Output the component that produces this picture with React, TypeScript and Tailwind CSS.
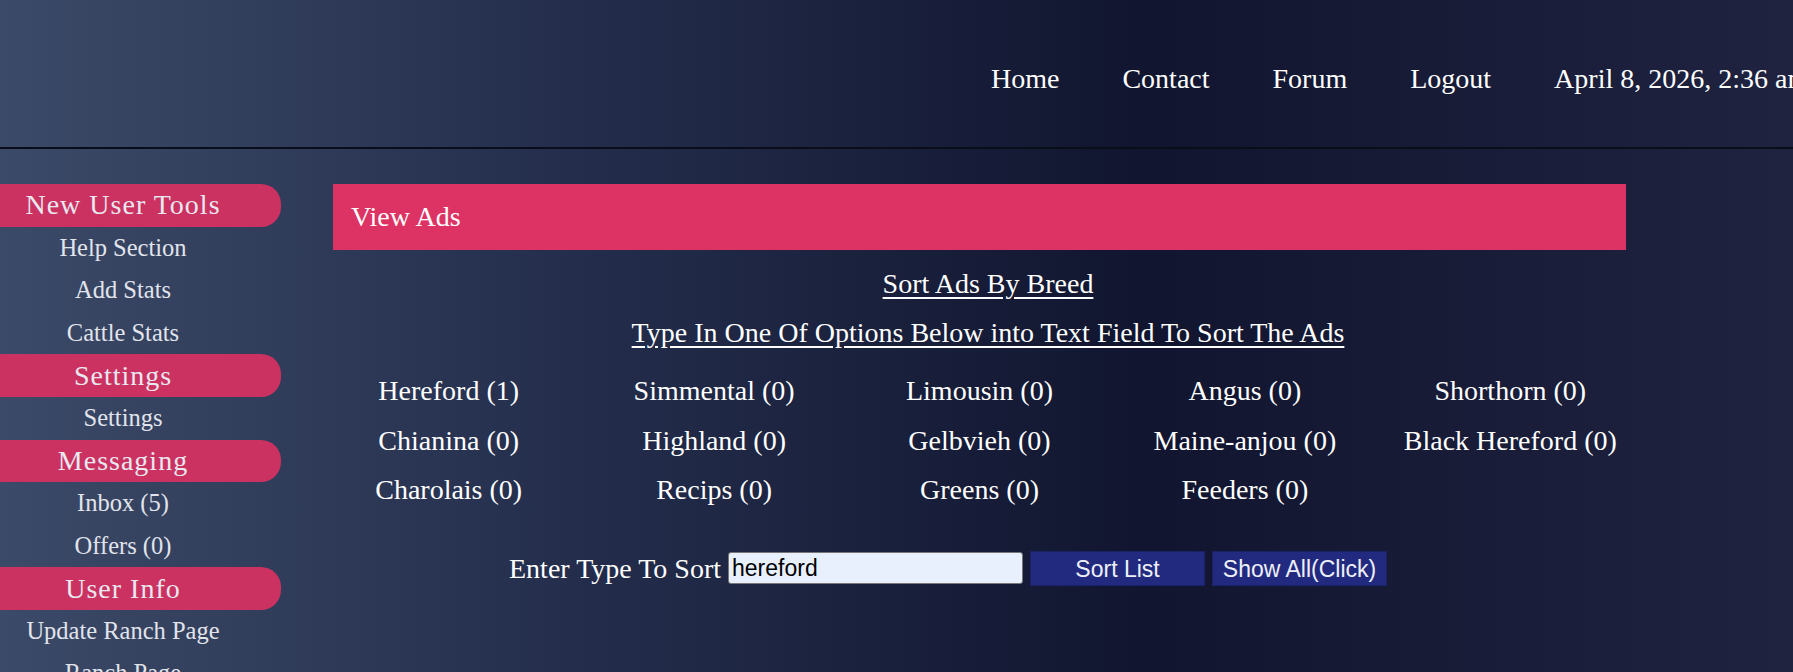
const navLinks = ["Home", "Contact", "Forum", "Logout"];

const sidebar: { title: string; items: string[] }[] = [
  { title: "New User Tools", items: ["Help Section", "Add Stats", "Cattle Stats"] },
  { title: "Settings", items: ["Settings"] },
  { title: "Messaging", items: ["Inbox (5)", "Offers (0)"] },
  { title: "User Info", items: ["Update Ranch Page", "Ranch Page"] },
];

const breeds = [
  "Hereford (1)",
  "Simmental (0)",
  "Limousin (0)",
  "Angus (0)",
  "Shorthorn (0)",
  "Chianina (0)",
  "Highland (0)",
  "Gelbvieh (0)",
  "Maine-anjou (0)",
  "Black Hereford (0)",
  "Charolais (0)",
  "Recips (0)",
  "Greens (0)",
  "Feeders (0)",
];

export default function App() {
  return (
    <div className="h-screen w-screen overflow-hidden bg-[linear-gradient(to_right,#3b4a68,#232d4b_33%,#11152f_64%,#1f2340)] font-['Liberation_Serif',serif] text-white">
      {/* Top bar */}
      <header className="h-[149px] border-b-2 border-[#0a0d1a] flex items-center pt-[10px] pl-[991px] whitespace-nowrap">
        <nav className="flex gap-[63px] text-[28px] leading-[31px]">
          {navLinks.map((l) => (
            <a key={l} href="#" className="text-white">
              {l}
            </a>
          ))}
          <span>April 8, 2026, 2:36 am</span>
        </nav>
      </header>

      <div className="flex gap-[52px] mt-[35px]">
        {/* Sidebar */}
        <aside className="w-[281px] shrink-0 flex flex-col">
          {sidebar.map((s) => (
            <div key={s.title} className="flex flex-col">
              <div className="h-[42.6px] flex items-center justify-center pr-[35px] bg-[#cb3261] rounded-r-[20px] text-[28px] tracking-[1px] text-[#e8e8f0]">
                {s.title}
              </div>
              {s.items.map((i) => (
                <a
                  key={i}
                  href="#"
                  className="h-[42.6px] flex items-center justify-center pr-[35px] text-[24.5px] text-[#e2e4ec]"
                >
                  {i}
                </a>
              ))}
            </div>
          ))}
        </aside>

        {/* Main column */}
        <main className="w-[1310px] shrink-0 flex flex-col">
          <div className="w-[1293px] h-[66px] bg-[#dc3364] flex items-center pl-[18px] text-[28px]">
            View Ads
          </div>

          <div className="mt-[9px] flex flex-col items-center text-[28px] leading-[49px]">
            <span className="underline underline-offset-[4px]">Sort Ads By Breed</span>
            <span className="underline underline-offset-[4px]">
              Type In One Of Options Below into Text Field To Sort The Ads
            </span>
          </div>

          <div className="mt-[9px] w-[1327px] -ml-[17px] grid grid-cols-5 text-[28px] leading-[49.5px] text-center">
            {breeds.map((b) => (
              <div key={b}>{b}</div>
            ))}
          </div>

          <form className="mt-[36px] flex items-center gap-[7px] pl-[176px] whitespace-nowrap">
            <label className="text-[28px] leading-[31px]">Enter Type To Sort</label>
            <input
              type="text"
              defaultValue="hereford"
              className="w-[295px] h-[32px] bg-[#e8f0fe] border border-[#767676] rounded-[3px] px-[3px] text-black text-[23px] font-['Liberation_Sans',Arial,sans-serif] outline-none"
            />
            <button
              type="button"
              className="w-[175px] h-[35px] bg-[#222a80] border border-[#1b2166] text-[#eef0f8] text-[23px] font-['Liberation_Sans',Arial,sans-serif]"
            >
              Sort List
            </button>
            <button
              type="button"
              className="w-[175px] h-[35px] bg-[#222a80] border border-[#1b2166] text-[#eef0f8] text-[23px] font-['Liberation_Sans',Arial,sans-serif]"
            >
              Show All(Click)
            </button>
          </form>
        </main>
      </div>
    </div>
  );
}
